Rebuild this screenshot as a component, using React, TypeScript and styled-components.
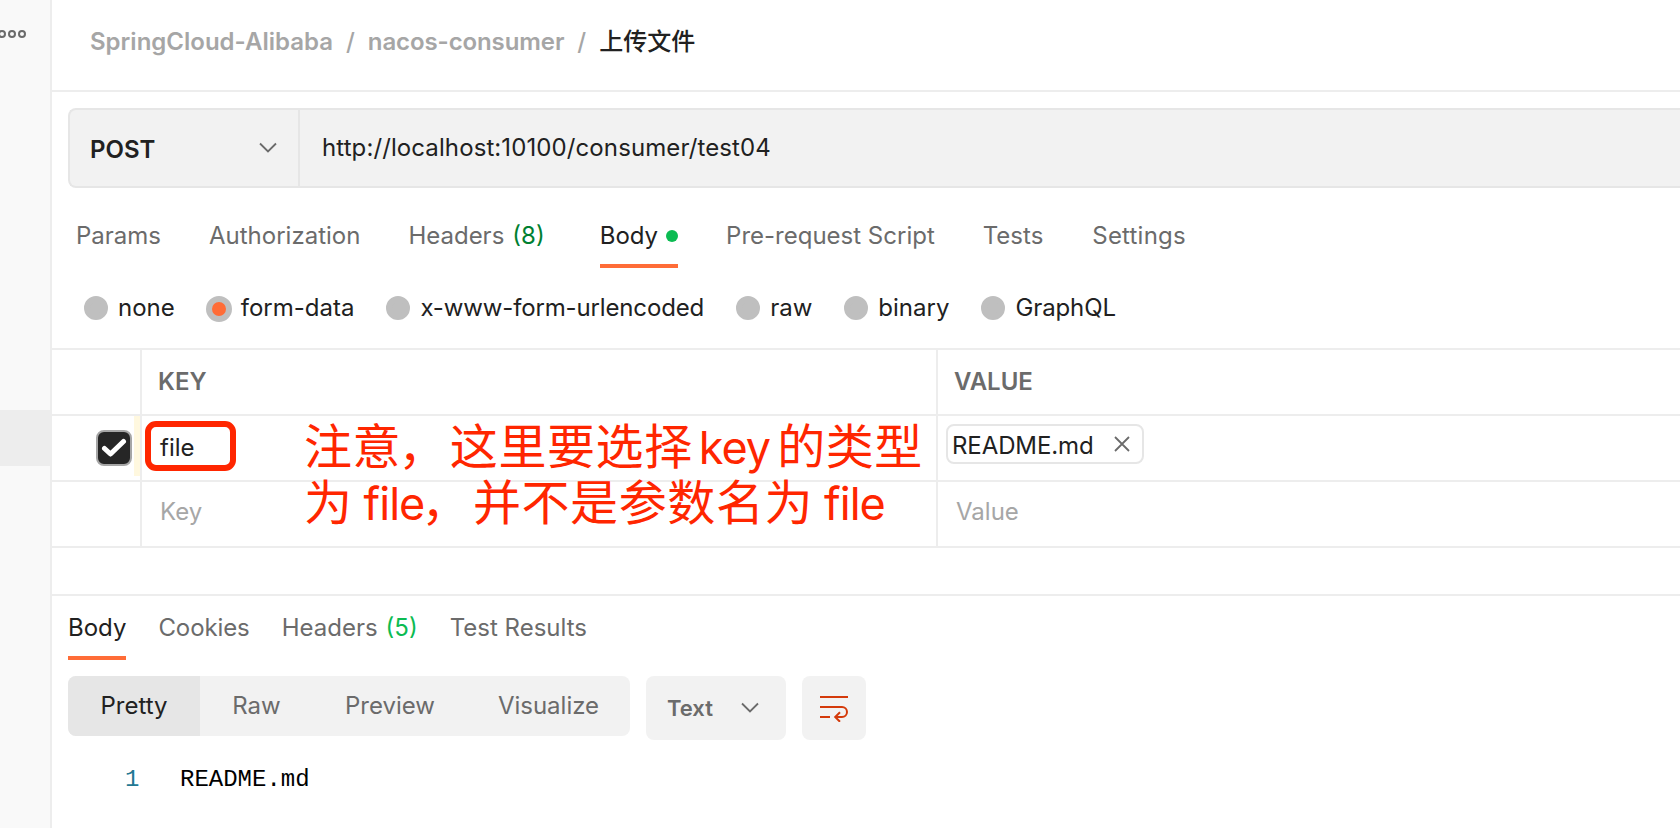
import React from "react";
import styled, { createGlobalStyle } from "styled-components";

const GlobalStyle = createGlobalStyle`
  * { box-sizing: border-box; }
  body {
    margin: 0;
    background: #fff;
    overflow: hidden;
    color: #212121;
    font: 400 24px/32px Inter, "Noto Sans CJK SC", sans-serif;
    white-space: nowrap;
  }
`;

const line = "#ededed";
const muted = "#6b6b6b";
const orange = "#ff6c37";
const red = "#ff2600";

const Page = styled.div`
  display: flex;
  width: 1680px;
  height: 828px;
  overflow: hidden;
`;

const Rail = styled.aside`
  flex: none;
  width: 52px;
  background: #f9f9f9;
  border-right: 2px solid ${line};
`;

const RailMenu = styled.div`
  height: 410px;
  padding-top: 29px;
  svg { display: block; }
`;

const RailActive = styled.div`
  height: 56px;
  background: ${line};
`;

const Main = styled.main`
  flex: 1;
  min-width: 0;
`;

const Breadcrumb = styled.header`
  display: flex;
  align-items: center;
  height: 92px;
  padding: 0 0 6px 38px;
  border-bottom: 2px solid ${line};
  color: #a6a6a6;
  font-weight: 600;
`;

const Crumb = styled.span<{ $spacing?: number }>`
  letter-spacing: ${(p) => p.$spacing ?? 0}px;
`;

const Separator = styled.span`
  margin: 0 13px;
  font-weight: 500;
`;

const Current = styled.span`
  color: #212121;
  font-weight: 500;
`;

const RequestBar = styled.div`
  display: flex;
  height: 80px;
  margin: 16px 0 0 16px;
  background: #f2f2f2;
  border: 2px solid #e6e6e6;
  border-right: 0;
  border-radius: 8px 0 0 8px;
`;

const Method = styled.div`
  display: flex;
  align-items: center;
  justify-content: space-between;
  width: 230px;
  padding: 4px 21px 0 20px;
  border-right: 2px solid #e6e6e6;
  font-weight: 600;
  svg { margin-top: -4px; }
`;

const Url = styled.div`
  padding: 22px 0 0 22px;
  letter-spacing: 0.1px;
`;

const RequestTabs = styled.nav`
  display: flex;
  gap: 48px;
  height: 80px;
  padding-left: 24px;
`;

const Tab = styled.div<{ $active?: boolean; $offset?: number; $extra?: number; $spacing?: number }>`
  position: relative;
  display: flex;
  align-items: center;
  height: 80px;
  padding-top: ${(p) => p.$offset ?? 16}px;
  margin-right: ${(p) => p.$extra ?? 0}px;
  letter-spacing: ${(p) => p.$spacing ?? 0}px;
  color: ${(p) => (p.$active ? "#212121" : muted)};
  &::after {
    content: "";
    display: ${(p) => (p.$active ? "block" : "none")};
    position: absolute;
    left: 0;
    right: 0;
    bottom: 0;
    height: 4px;
    background: ${orange};
  }
`;

const Count = styled.span<{ $color: string }>`
  margin-left: 8px;
  color: ${(p) => p.$color};
`;

const Dot = styled.i`
  width: 12px;
  height: 12px;
  margin-left: 8px;
  border-radius: 50%;
  background: #0cbb52;
`;

const BodyTypes = styled.div`
  display: flex;
  align-items: center;
  gap: 32px;
  height: 80px;
  padding-left: 32px;
`;

const BodyType = styled.label<{ $checked?: boolean; $spacing?: number }>`
  display: flex;
  align-items: center;
  gap: ${(p) => (p.$checked ? 9 : 10)}px;
  margin-left: ${(p) => (p.$checked ? -1 : 0)}px;
  letter-spacing: ${(p) => p.$spacing ?? 0}px;
`;

const Radio = styled.i<{ $checked?: boolean }>`
  flex: none;
  width: ${(p) => (p.$checked ? 26 : 24)}px;
  height: ${(p) => (p.$checked ? 26 : 24)}px;
  border-radius: 50%;
  background: ${(p) => (p.$checked ? orange : "#bfbfbf")};
  border: 6px solid #bfbfbf;
  margin-top: ${(p) => (p.$checked ? 2 : 0)}px;
`;

const Table = styled.section`
  position: relative;
  border-top: 2px solid ${line};
`;

const Row = styled.div`
  display: grid;
  grid-template-columns: 88px 796px 1fr;
  height: 66px;
  border-bottom: 2px solid ${line};
`;

const Cell = styled.div<{ $kind?: "head" | "hint" }>`
  display: flex;
  align-items: center;
  padding-left: ${(p) => (p.$kind === "head" ? 16 : 18)}px;
  padding-bottom: ${(p) => (p.$kind === "hint" ? 4 : 0)}px;
  border-left: 2px solid ${line};
  color: ${(p) => (p.$kind === "head" ? muted : p.$kind === "hint" ? "#a6a6a6" : "#212121")};
  font-weight: ${(p) => (p.$kind === "head" ? 600 : 400)};
`;

const CheckCell = styled.div`
  display: flex;
  align-items: center;
  justify-content: flex-end;
`;

const Checkbox = styled.span`
  display: grid;
  place-items: center;
  width: 36px;
  height: 36px;
  background: #262626;
  border: 2px solid #a6a6a6;
  border-radius: 8px;
`;

const Strip = styled.i`
  align-self: flex-start;
  width: 6px;
  height: 60px;
  margin-left: 2px;
  background: #fff8df;
`;

const FileChip = styled.span`
  display: flex;
  align-items: center;
  justify-content: space-between;
  width: 198px;
  height: 40px;
  margin: -8px 0 0 -10px;
  padding: 0 12px 0 4px;
  border: 2px solid #e6e6e6;
  border-radius: 8px;
`;

const FileName = styled.span`
  padding-top: 3px;
  letter-spacing: -0.1px;
`;

const Highlight = styled.div`
  position: absolute;
  left: 93px;
  top: 71px;
  width: 91px;
  height: 50px;
  border: 6px solid ${red};
  border-radius: 11px;
`;

const Note = styled.p`
  position: absolute;
  left: 252px;
  top: 69px;
  margin: 0;
  color: ${red};
  font: 400 48px/56px Inter, "Noto Sans CJK SC", sans-serif;
`;

const NoteLine = styled.span`
  display: block;
  height: 56px;
  letter-spacing: 0.6px;
`;

const Comma = styled.span`
  margin: 0 3px 0 -3px;
`;

const Latin = styled.span<{ $before: number; $after?: number }>`
  margin: 0 ${(p) => p.$after ?? 0}px 0 ${(p) => p.$before}px;
  font-size: 45px;
  line-height: 1;
  letter-spacing: -1px;
`;

const Response = styled.section`
  margin-top: 46px;
  border-top: 2px solid ${line};
  padding-left: 16px;
`;

const ResponseTabs = styled.nav`
  display: flex;
  gap: 32px;
  height: 64px;
  & > div { height: 64px; }
`;

const Toolbar = styled.div`
  display: flex;
  align-items: flex-start;
  gap: 16px;
  margin-top: 16px;
`;

const Segments = styled.div`
  display: flex;
  height: 60px;
  border-radius: 8px;
  overflow: hidden;
  background: #f2f2f2;
`;

const Segment = styled.div<{ $active?: boolean; $width: number }>`
  width: ${(p) => p.$width}px;
  padding: 14px 0;
  text-align: center;
  color: ${(p) => (p.$active ? "#212121" : muted)};
  background: ${(p) => (p.$active ? "#e6e6e6" : "transparent")};
`;

const ToolButton = styled.div<{ $width: number }>`
  display: flex;
  align-items: center;
  justify-content: space-between;
  width: ${(p) => p.$width}px;
  height: 64px;
  padding: 0 ${(p) => (p.$width > 64 ? "27px 0 21px" : "18px")};
  border-radius: 8px;
  background: #f2f2f2;
  color: ${muted};
  font-size: 22px;
  font-weight: 600;
`;

const Code = styled.pre`
  display: flex;
  margin: 22px 0 0 57px;
  color: #000;
  font: 400 24px/36px "Liberation Mono", monospace;
`;

const LineNumber = styled.span`
  width: 55px;
  color: #237893;
`;

const Chevron = () => (
  <svg width="18" height="12" viewBox="0 0 18 12" fill="none" stroke={muted} strokeWidth="1.8">
    <path d="M1 1.5 9 9.5 17 1.5" />
  </svg>
);

const bodyTypes = [
  { name: "none" },
  { name: "form-data", checked: true },
  { name: "x-www-form-urlencoded", spacing: -0.14 },
  { name: "raw" },
  { name: "binary" },
  { name: "GraphQL", spacing: -0.1 },
];

export default function App() {
  return (
    <Page>
      <GlobalStyle />
      <Rail>
        <RailMenu>
          <svg width="28" height="10" viewBox="0 0 28 10" fill="none" stroke={muted} strokeWidth="2">
            <circle cx="2" cy="5" r="3" />
            <circle cx="12" cy="5" r="3" />
            <circle cx="22" cy="5" r="3" />
          </svg>
        </RailMenu>
        <RailActive />
      </Rail>
      <Main>
        <Breadcrumb>
          <Crumb>SpringCloud-Alibaba</Crumb>
          <Separator>/</Separator>
          <Crumb $spacing={-0.1}>nacos-consumer</Crumb>
          <Separator>/</Separator>
          <Current>上传文件</Current>
        </Breadcrumb>
        <RequestBar>
          <Method>
            POST
            <Chevron />
          </Method>
          <Url>http://localhost:10100/consumer/test04</Url>
        </RequestBar>
        <RequestTabs>
          <Tab>Params</Tab>
          <Tab>Authorization</Tab>
          <Tab $extra={7}>Headers<Count $color="#007f31">(8)</Count></Tab>
          <Tab $active>Body<Dot /></Tab>
          <Tab>Pre-request Script</Tab>
          <Tab $extra={1}>Tests</Tab>
          <Tab $spacing={0.2}>Settings</Tab>
        </RequestTabs>
        <BodyTypes>
          {bodyTypes.map(({ name, checked, spacing }) => (
            <BodyType key={name} $checked={checked} $spacing={spacing}>
              <Radio $checked={checked} />
              {name}
            </BodyType>
          ))}
        </BodyTypes>
        <Table>
          <Row>
            <CheckCell />
            <Cell $kind="head">KEY</Cell>
            <Cell $kind="head">VALUE</Cell>
          </Row>
          <Row>
            <CheckCell>
              <Checkbox>
                <svg width="26" height="20" viewBox="0 0 26 20" fill="none" stroke="#fff" strokeWidth="5" strokeLinecap="round" strokeLinejoin="round">
                  <path d="M3.5 10.5 9.5 16 22.5 3.5" />
                </svg>
              </Checkbox>
              <Strip />
            </CheckCell>
            <Cell>file</Cell>
            <Cell>
              <FileChip>
                <FileName>README.md</FileName>
                <svg width="16" height="16" viewBox="0 0 16 16" fill="none" stroke={muted} strokeWidth="1.8">
                  <path d="M1 1 15 15M15 1 1 15" />
                </svg>
              </FileChip>
            </Cell>
          </Row>
          <Row>
            <CheckCell />
            <Cell $kind="hint">Key</Cell>
            <Cell $kind="hint">Value</Cell>
          </Row>
          <Highlight />
          <Note>
            <NoteLine>注意<Comma>，</Comma>这里要选择<Latin $before={6} $after={7}>key</Latin>的类型</NoteLine>
            <NoteLine>为<Latin $before={11}>file</Latin><Comma>，</Comma>并不是参数名为<Latin $before={11}>file</Latin></NoteLine>
          </Note>
        </Table>
        <Response>
          <ResponseTabs>
            <Tab $offset={0} $active>Body</Tab>
            <Tab $offset={0} $spacing={-0.1}>Cookies</Tab>
            <Tab $offset={0}>Headers<Count $color="#0cbb52">(5)</Count></Tab>
            <Tab $offset={0}>Test Results</Tab>
          </ResponseTabs>
          <Toolbar>
            <Segments>
              <Segment $width={132} $active>Pretty</Segment>
              <Segment $width={113}>Raw</Segment>
              <Segment $width={154}>Preview</Segment>
              <Segment $width={163}>Visualize</Segment>
            </Segments>
            <ToolButton $width={140}>
              Text
              <Chevron />
            </ToolButton>
            <ToolButton $width={64}>
              <svg width="28" height="28" viewBox="0 0 28 28" fill="none" stroke="#d43a0b" strokeWidth="2">
                <path d="M0 3H28M0 13H22A5 5 0 0 1 22 23H15.5M0 23H10M20 18.2 15.2 23 20 27.8" />
              </svg>
            </ToolButton>
          </Toolbar>
          <Code>
            <LineNumber>1</LineNumber>
            <span>README.md</span>
          </Code>
        </Response>
      </Main>
    </Page>
  );
}
